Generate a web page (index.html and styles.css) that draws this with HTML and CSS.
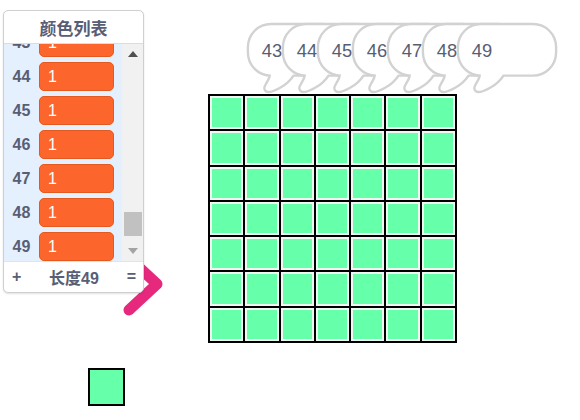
FILE: index.html
```html
<!DOCTYPE html>
<html lang="zh">
<head>
  <meta charset="UTF-8" />
  <meta name="viewport" content="width=device-width, initial-scale=1.0"/>
  <title>颜色列表</title>
  <link rel="stylesheet" href="styles.css">
</head>
<body>
  <svg class="defs" width="0" height="0">
    <defs>
      <path id="bubbleShape" transform="translate(70,0) scale(-1,1)"
        d="M16,36 A16,16 0 0 1 0,20 L0,16 A16,16 0 0 1 16,0 L54,0 A16,16 0 0 1 70,16 L70,20 A16,16 0 0 1 54,36 C54,40 58,44 58,46 A2,2 0 0 1 56,48 C53,48 43,44 38,36 Z"/>
    </defs>
  </svg>

  <div class="stage">
    <svg class="pen" width="60" height="80" viewBox="0 0 60 80">
      <path d="M14,13 L42,39 L14,65" />
    </svg>

    <div class="monitor">
      <div class="monitor-title">颜色列表</div>
      <div class="monitor-body">
        <div class="items">
          <div class="row"><span class="idx">43</span><span class="val">1</span></div>
          <div class="row"><span class="idx">44</span><span class="val">1</span></div>
          <div class="row"><span class="idx">45</span><span class="val">1</span></div>
          <div class="row"><span class="idx">46</span><span class="val">1</span></div>
          <div class="row"><span class="idx">47</span><span class="val">1</span></div>
          <div class="row"><span class="idx">48</span><span class="val">1</span></div>
          <div class="row"><span class="idx">49</span><span class="val">1</span></div>
        </div>
        <div class="scrollbar">
          <div class="arrow"><span class="tri up"></span></div>
          <div class="track"><div class="thumb"></div></div>
          <div class="arrow"><span class="tri down"></span></div>
        </div>
      </div>
      <div class="monitor-foot">
        <span>+</span>
        <span class="len">长度49</span>
        <span>=</span>
      </div>
    </div>

    <div class="bubbles">
      <svg class="bubble" viewBox="-3 -3 76 54"><use href="#bubbleShape"/><text x="9.2" y="23">43</text></svg>
      <svg class="bubble" viewBox="-3 -3 76 54"><use href="#bubbleShape"/><text x="9.2" y="23">44</text></svg>
      <svg class="bubble" viewBox="-3 -3 76 54"><use href="#bubbleShape"/><text x="9.2" y="23">45</text></svg>
      <svg class="bubble" viewBox="-3 -3 76 54"><use href="#bubbleShape"/><text x="9.2" y="23">46</text></svg>
      <svg class="bubble" viewBox="-3 -3 76 54"><use href="#bubbleShape"/><text x="9.2" y="23">47</text></svg>
      <svg class="bubble" viewBox="-3 -3 76 54"><use href="#bubbleShape"/><text x="9.2" y="23">48</text></svg>
      <svg class="bubble" viewBox="-3 -3 76 54"><use href="#bubbleShape"/><text x="9.2" y="23">49</text></svg>
    </div>

    <div class="grid">
      <div class="cell"></div><div class="cell"></div><div class="cell"></div><div class="cell"></div><div class="cell"></div><div class="cell"></div><div class="cell"></div>
      <div class="cell"></div><div class="cell"></div><div class="cell"></div><div class="cell"></div><div class="cell"></div><div class="cell"></div><div class="cell"></div>
      <div class="cell"></div><div class="cell"></div><div class="cell"></div><div class="cell"></div><div class="cell"></div><div class="cell"></div><div class="cell"></div>
      <div class="cell"></div><div class="cell"></div><div class="cell"></div><div class="cell"></div><div class="cell"></div><div class="cell"></div><div class="cell"></div>
      <div class="cell"></div><div class="cell"></div><div class="cell"></div><div class="cell"></div><div class="cell"></div><div class="cell"></div><div class="cell"></div>
      <div class="cell"></div><div class="cell"></div><div class="cell"></div><div class="cell"></div><div class="cell"></div><div class="cell"></div><div class="cell"></div>
      <div class="cell"></div><div class="cell"></div><div class="cell"></div><div class="cell"></div><div class="cell"></div><div class="cell"></div><div class="cell"></div>
    </div>

    <div class="swatch"></div>
  </div>
</body>
</html>
```

FILE: styles.css
```css
body {
  margin: 0;
  background: #fff;
  font-family: 'Liberation Sans', 'Noto Sans CJK SC', sans-serif;
  color: #575e75;
}

.defs { position: absolute; }

.stage {
  position: relative;
  width: 580px;
  height: 420px;
  overflow: hidden;
  background: #fff;
}

/* pink sprite, mostly hidden behind the list */
.pen {
  position: absolute;
  left: 115px;
  top: 245px;
}

.pen path {
  fill: none;
  stroke: #e6297d;
  stroke-width: 11;
  stroke-linecap: round;
  stroke-linejoin: round;
}

/* list monitor */
.monitor {
  position: absolute;
  left: 3px;
  top: 10px;
  width: 141px;
  height: 283px;
  box-sizing: border-box;
  border: 1px solid #cfcfcf;
  border-radius: 5px;
  background: #fff;
  box-shadow: 0 1px 2px rgba(0, 0, 0, 0.12);
  display: flex;
  flex-direction: column;
  overflow: hidden;
}

.monitor-title {
  height: 32px;
  flex: none;
  display: flex;
  align-items: center;
  justify-content: center;
  font-size: 17px;
  font-weight: bold;
  border-bottom: 1px solid #dcdcdc;
}

.monitor-body {
  flex: 1;
  display: flex;
  background: #e5f0ff;
  overflow: hidden;
}

.items {
  flex: 1;
  display: flex;
  flex-direction: column;
  gap: 5px;
  margin-top: -16px;
}

.row {
  height: 29px;
  flex: none;
  display: flex;
  align-items: center;
}

.idx {
  width: 35px;
  text-align: center;
  font-size: 16px;
  font-weight: bold;
}

.val {
  width: 75px;
  height: 29px;
  box-sizing: border-box;
  background: #fc662c;
  border: 1px solid #e4591f;
  border-radius: 5px;
  color: #fff;
  font-size: 16px;
  line-height: 27px;
  padding-left: 8px;
}

.scrollbar {
  width: 21px;
  flex: none;
  background: #f1f1f1;
  display: flex;
  flex-direction: column;
}

.arrow {
  height: 20px;
  flex: none;
  display: flex;
  align-items: center;
  justify-content: center;
}

.tri {
  width: 0;
  height: 0;
  border-left: 5px solid transparent;
  border-right: 5px solid transparent;
}

.tri.up { border-bottom: 6px solid #505050; }
.tri.down { border-top: 6px solid #a3a3a3; }

.track {
  flex: 1;
  display: flex;
  flex-direction: column;
  justify-content: flex-end;
  padding: 0 1px 5px 2px;
}

.thumb {
  height: 24px;
  background: #c1c1c1;
}

.monitor-foot {
  height: 30px;
  flex: none;
  display: flex;
  align-items: center;
  justify-content: space-between;
  padding: 0 7px 0 8px;
  font-size: 16px;
  font-weight: bold;
  border-top: 1px solid #e4e4e4;
}

/* speech bubbles */
.bubbles {
  position: absolute;
  left: 245px;
  top: 21px;
  display: flex;
}

.bubble {
  width: 104px;
  height: 74px;
  flex: none;
  margin-right: -69px;
}

.bubble use {
  fill: #fff;
  stroke: #d2d2d2;
  stroke-width: 3.5;
  paint-order: stroke;
}

.bubble text {
  font-family: 'Liberation Sans', sans-serif;
  font-size: 13.4px;
  fill: #575e75;
}

/* 7 x 7 block grid */
.grid {
  position: absolute;
  left: 208px;
  top: 94px;
  width: 249px;
  height: 249px;
  box-sizing: border-box;
  padding: 2px;
  gap: 2px;
  background: #000;
  display: grid;
  grid-template-columns: repeat(7, 1fr);
  grid-template-rows: repeat(7, 1fr);
}

.cell {
  background: #66ffaa;
  border: 2px solid #eef7f1;
}

.swatch {
  position: absolute;
  left: 88px;
  top: 368px;
  width: 37px;
  height: 38px;
  box-sizing: border-box;
  background: #66ffaa;
  border: 2px solid #eef7f1;
  outline: 2px solid #000;
  outline-offset: -2px;
}
```
